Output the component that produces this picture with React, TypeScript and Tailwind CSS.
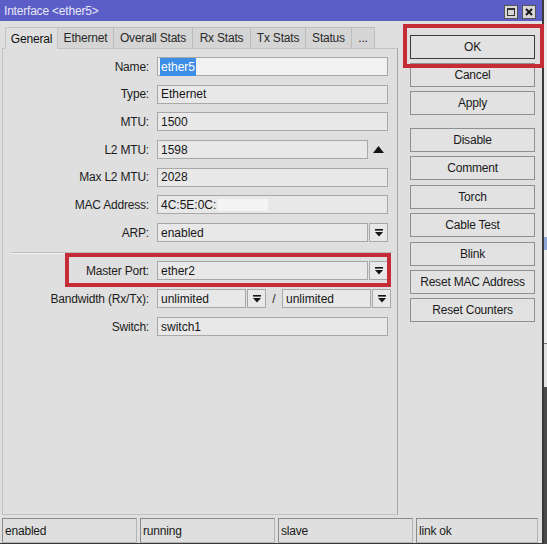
import type { ReactNode } from 'react';

const font = "font-['Liberation_Sans',Arial,sans-serif]";

function DropIcon() {
  return (
    <svg width="8" height="8" viewBox="0 0 8 8">
      <rect x="0" y="0" width="8" height="1.6" fill="#151515" />
      <path d="M0 3h8L4 7.6z" fill="#151515" />
    </svg>
  );
}

function Box({ width, children }: { width: number; children?: ReactNode }) {
  return (
    <div
      className="h-[19px] border border-[#a8a8a8] bg-[#e8e8e8] px-[3px] flex items-center text-[12px] text-[#161616] overflow-hidden whitespace-nowrap"
      style={{ width }}
    >
      {children}
    </div>
  );
}

function DropButton() {
  return (
    <div className="ml-[1px] w-[19px] h-[19px] border border-[#a8a8a8] bg-[#e8e8e8] flex items-center justify-center">
      <DropIcon />
    </div>
  );
}

function Row({ label, children }: { label: string; children: ReactNode }) {
  return (
    <div className="flex items-center h-[19px]">
      <div className="w-[146px] text-right text-[12px] tracking-[-0.2px] text-[#1c1c1c] whitespace-nowrap">{label}</div>
      <div className="ml-[8px] flex items-center">{children}</div>
    </div>
  );
}

const tabs = [
  { label: 'General', w: 53 },
  { label: 'Ethernet', w: 56 },
  { label: 'Overall Stats', w: 79 },
  { label: 'Rx Stats', w: 58 },
  { label: 'Tx Stats', w: 55 },
  { label: 'Status', w: 46 },
  { label: '...', w: 23 },
];

const actions = ['Disable', 'Comment', 'Torch', 'Cable Test', 'Blink', 'Reset MAC Address', 'Reset Counters'];

function Btn({ label, strong }: { label: string; strong?: boolean }) {
  return (
    <div
      className={
        'w-[125px] h-[24px] flex items-center justify-center text-[12px] tracking-[-0.2px] text-[#1a1a1a] bg-[#e2e2e2] border ' +
        (strong ? 'border-[#3c3c3c]' : 'border-[#8f8f8f]')
      }
    >
      {label}
    </div>
  );
}

export default function App() {
  return (
    <div className={`relative w-[547px] h-[544px] flex overflow-hidden bg-[#e6e6e6] ${font}`}>
      {/* window */}
      <div className="w-[544px] h-[544px] flex flex-col border-r-2 border-b border-[#3a3a3a]">
        {/* title bar */}
        <div className="h-[21px] bg-[#5b5ec6] flex items-center pl-[4px] pr-[6px]">
          <span className="text-[12px] text-[#e6e6f6] tracking-[-0.2px]">Interface &lt;ether5&gt;</span>
          <div className="ml-auto flex gap-[4px] mt-[2px]">
            <div className="w-[14px] h-[14px] bg-[#d6d6d6] border border-[#555] flex items-center justify-center">
              <div className="w-[8px] h-[8px] border border-[#333] border-t-2" />
            </div>
            <div className="w-[14px] h-[14px] bg-[#d6d6d6] border border-[#555] flex items-center justify-center">
              <svg width="8" height="8" viewBox="0 0 8 8">
                <path d="M1 1L7 7M7 1L1 7" stroke="#1a1a1a" strokeWidth="2" />
              </svg>
            </div>
          </div>
        </div>

        {/* body */}
        <div className="flex-1 flex flex-col bg-[#dfdfdf]">
          <div className="h-[495px] flex">
            {/* left: tabs + panel */}
            <div className="w-[398px] pl-[2px] flex flex-col">
              <div className="mt-[6px] pl-[3px] flex h-[21px]">
                {tabs.map((t, i) => (
                  <div
                    key={t.label}
                    className={
                      'h-[21px] flex items-center justify-center text-[12px] tracking-[-0.2px] border-t border-r ' +
                      (i === 0
                        ? 'bg-[#dfdfdf] border-l border-[#c4c4c4] text-[#111] relative z-10 h-[22px]'
                        : 'bg-[#d5d5d5] border-[#bdbdbd] text-[#2a2a2a]')
                    }
                    style={{ width: t.w }}
                  >
                    {t.label}
                  </div>
                ))}
              </div>
              <div className="h-[467px] border border-[#c2c2c2] border-r-[#a6a6a6] pt-[8px] flex flex-col">
                <div className="flex flex-col gap-[8.7px]">
                  <Row label="Name:">
                    <div className="h-[19px] w-[231px] border border-[#a8a8a8] bg-[#f1f1f1] px-[2px] flex items-center text-[12px]">
                      <span className="bg-[#3d8ee6] text-white px-[1px]">ether5</span>
                    </div>
                  </Row>
                  <Row label="Type:">
                    <Box width={231}>Ethernet</Box>
                  </Row>
                  <Row label="MTU:">
                    <Box width={231}>1500</Box>
                  </Row>
                  <Row label="L2 MTU:">
                    <Box width={211}>1598</Box>
                    <div className="w-[20px] flex justify-center">
                      <svg width="11" height="7" viewBox="0 0 11 7">
                        <path d="M0 7L5.5 0L11 7z" fill="#151515" />
                      </svg>
                    </div>
                  </Row>
                  <Row label="Max L2 MTU:">
                    <Box width={231}>2028</Box>
                  </Row>
                  <Row label="MAC Address:">
                    <Box width={231}>
                      4C:5E:0C:
                      <span className="ml-[2px] w-[50px] h-[12px] bg-[#f4f4f4]" />
                    </Box>
                  </Row>
                  <Row label="ARP:">
                    <Box width={211}>enabled</Box>
                    <DropButton />
                  </Row>
                </div>

                <div className="mt-[10px] ml-[9px] mr-[4px] h-px bg-[#bcbcbc]" />
                <div className="ml-[9px] mr-[4px] h-px bg-[#f2f2f2]" />

                <div className="mt-[7px] flex flex-col gap-[9px]">
                  <Row label="Master Port:">
                    <Box width={211}>ether2</Box>
                    <DropButton />
                  </Row>
                  <Row label="Bandwidth (Rx/Tx):">
                    <Box width={89}>unlimited</Box>
                    <DropButton />
                    <span className="w-[16px] text-center text-[12px] text-[#222]">/</span>
                    <Box width={89}>unlimited</Box>
                    <DropButton />
                  </Row>
                  <Row label="Switch:">
                    <Box width={231}>switch1</Box>
                  </Row>
                </div>
              </div>
            </div>

            {/* right: buttons */}
            <div className="pl-[12px] pt-[14px] flex flex-col gap-[4px]">
              <Btn label="OK" strong />
              <Btn label="Cancel" />
              <Btn label="Apply" />
              <div className="mt-[9px] flex flex-col gap-[4.4px]">
                {actions.map(a => (
                  <Btn key={a} label={a} />
                ))}
              </div>
            </div>
          </div>

          {/* status bar */}
          <div className="h-[27px] pt-[2px] pl-[2px] flex gap-[3px]">
            {['enabled', 'running', 'slave', 'link ok'].map((s, i) => (
              <div
                key={s}
                className="h-[25px] border border-[#b4b4b4] border-t-[#8a8a8a] border-l-[#8a8a8a] flex items-center pl-[2px] text-[12px] tracking-[-0.2px] text-[#1a1a1a]"
                style={{ width: i === 3 ? 122 : 135 }}
              >
                {s}
              </div>
            ))}
          </div>
        </div>
      </div>

      {/* window behind, at the right edge */}
      <div className="flex-1 flex flex-col">
        <div className="h-[237px] bg-[#ececec]" />
        <div className="h-[13px] bg-[#8fa8d8]" />
        <div className="h-[93px] bg-[#ececec]" />
        <div className="h-px bg-[#777]" />
        <div className="h-[43px] bg-[#e2e2e2]" />
        <div className="flex-1 bg-[#4a4a4a]" />
      </div>

      {/* red highlight frames */}
      <div className="absolute left-[403px] top-[24px] w-[141px] h-[44px] border-4 border-[#c62b38]" />
      <div className="absolute left-[65px] top-[253px] w-[326px] h-[34px] border-4 border-[#c62b38]" />
    </div>
  );
}
